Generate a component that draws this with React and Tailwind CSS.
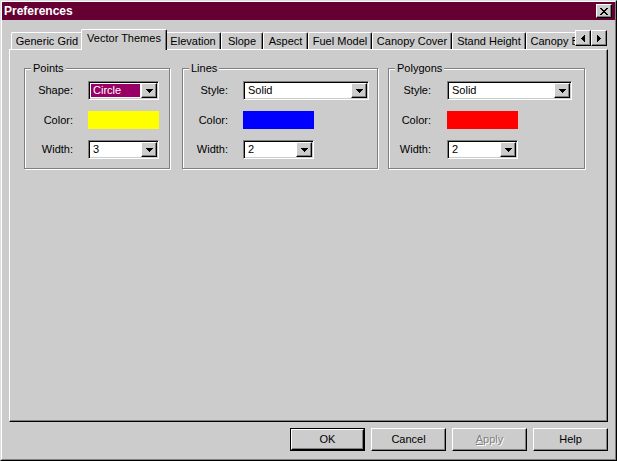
import React from 'react';

const tabs = [
  { label: 'Generic Grid', w: 'w-[72px]' },
  { label: 'Vector Themes', w: 'w-[86px]', active: true },
  { label: 'Elevation', w: 'w-[56px]' },
  { label: 'Slope', w: 'w-[42px]' },
  { label: 'Aspect', w: 'w-[45px]' },
  { label: 'Fuel Model', w: 'w-[64px]' },
  { label: 'Canopy Cover', w: 'w-[80px]' },
  { label: 'Stand Height', w: 'w-[74px]' },
  { label: 'Canopy Base Height', w: 'w-[110px]' },
];

const DownArrow = () => (
  <svg width="7" height="4" viewBox="0 0 7 4">
    <path d="M0 0h7v1h-1v1h-1v1h-1v1h-1v-1h-1v-1h-1v-1h-1z" fill="#000" />
  </svg>
);

const LeftArrow = () => (
  <svg width="4" height="7" viewBox="0 0 4 7">
    <path d="M4 0v7h-1v-1h-1v-1h-1v-1h-1v-1h1v-1h1v-1h1v-1z" fill="#000" />
  </svg>
);

const RightArrow = () => (
  <svg width="4" height="7" viewBox="0 0 4 7">
    <path d="M0 0v7h1v-1h1v-1h1v-1h1v-1h-1v-1h-1v-1h-1v-1z" fill="#000" />
  </svg>
);

// pixel X used on the caption close box
const xRows = ['11000011', '01100110', '00111100', '00011000', '00111100', '01100110', '11000011'];
const CloseGlyph = () => (
  <svg width="8" height="7" viewBox="0 0 8 7">
    {xRows.map((row, y) =>
      row.split('').map((c, x) => (c === '1' ? <rect key={`${x}-${y}`} x={x} y={y} width="1" height="1" fill="#000" /> : null))
    )}
  </svg>
);

const raised =
  'border border-t-white border-l-white border-r-black border-b-black shadow-[inset_-1px_-1px_0_#808080] bg-[#cccccc]';

const Combo = ({ value, w, highlight }) => (
  <div
    className={`flex h-[19px] ${w} bg-white p-[1px] border border-t-[#808080] border-l-[#808080] border-r-white border-b-white shadow-[inset_1px_1px_0_#000,inset_-1px_-1px_0_#cccccc]`}
  >
    <div className="flex-1 flex items-center pl-[1px]">
      {highlight ? (
        <span className="flex-1 h-[13px] mr-[1px] bg-[#990066] text-white leading-[13px] pl-[2px]">{value}</span>
      ) : (
        <span className="pl-[2px]">{value}</span>
      )}
    </div>
    <div className={`w-[16px] h-[15px] flex items-center justify-center ${raised}`}>
      <DownArrow />
    </div>
  </div>
);

const Swatch = ({ color }) => <div className={`h-[18px] w-[71px] ${color}`} />;

const Row = ({ label, labelW, gap, children, className = '' }) => (
  <div className={`flex items-center ${className}`}>
    <span className={`${labelW} text-right`}>{label}</span>
    <div className={gap}>{children}</div>
  </div>
);

const Group = ({ title, className, children }) => (
  <div
    className={`relative flex flex-col border border-[#808080] shadow-[inset_1px_1px_0_#fff,1px_1px_0_#fff] pt-[12px] pb-[9px] ${className}`}
  >
    <span className="absolute -top-[8px] left-[6px] bg-[#cccccc] px-[2px] leading-[14px]">{title}</span>
    {children}
  </div>
);

const Button = ({ children, isDefault, disabled }) => {
  const inner = (
    <div
      className={`flex-1 flex items-center justify-center ${raised} ${
        disabled ? 'text-[#808080] [text-shadow:1px_1px_0_#fff]' : ''
      }`}
    >
      {children}
    </div>
  );
  return isDefault ? (
    <div className="w-[75px] h-[23px] flex border border-black">{inner}</div>
  ) : (
    <div className="w-[75px] h-[23px] flex">{inner}</div>
  );
};

export default function App() {
  return (
    <div className="w-[617px] h-[461px] flex flex-col bg-[#cccccc] text-[11px] text-black font-['Liberation_Sans',Arial,sans-serif] border border-t-[#dfdfdf] border-l-[#dfdfdf] border-r-black border-b-black">
      <div className="flex-1 flex flex-col border border-t-white border-l-white border-r-[#808080] border-b-[#808080]">
        {/* Caption */}
        <div className="h-[18px] bg-[#660033] flex items-center justify-between pl-[2px] pr-[3px]">
          <span className="text-white font-bold text-[12px]">Preferences</span>
          <div className={`w-[16px] h-[14px] flex items-center justify-center ${raised}`}>
            <CloseGlyph />
          </div>
        </div>

        {/* Tab strip */}
        <div className="relative z-10 mt-[9px] -mb-[1px] h-[21px] flex pl-[9px] pr-[8px]">
          <div className="flex-1 min-w-0 overflow-hidden flex items-end">
            {tabs.map((t) =>
              t.active ? (
                <div
                  key={t.label}
                  className={`relative z-10 -mx-[2px] h-[21px] ${t.w} shrink-0 bg-[#cccccc] flex items-center justify-center pb-[3px] border-l border-t border-r border-l-white border-t-white border-r-black rounded-tl-[2px] rounded-tr-[2px] shadow-[inset_-1px_0_0_#808080]`}
                >
                  {t.label}
                </div>
              ) : (
                <div
                  key={t.label}
                  className={`h-[17px] mb-[1px] ${t.w} shrink-0 flex items-center justify-center whitespace-nowrap overflow-hidden border-l border-t border-r border-l-white border-t-white border-r-black rounded-tl-[2px] rounded-tr-[2px] shadow-[inset_-1px_0_0_#808080]`}
                >
                  {t.label}
                </div>
              )
            )}
          </div>
          <div className="flex self-start mt-[1px]">
            <div className={`w-[16px] h-[16px] flex items-center justify-center ${raised}`}>
              <LeftArrow />
            </div>
            <div className={`w-[16px] h-[16px] flex items-center justify-center ${raised}`}>
              <RightArrow />
            </div>
          </div>
        </div>

        {/* Tab page */}
        <div className="flex-1 mx-[7px] flex items-start pt-[18px] pl-[14px] border border-t-white border-l-white border-r-black border-b-black shadow-[inset_-1px_-1px_0_#808080]">
          <Group title="Points" className="w-[146px]">
            <Row label="Shape:" labelW="w-[48px]" gap="ml-[15px]">
              <Combo value="Circle" w="w-[71px]" highlight />
            </Row>
            <Row label="Color:" labelW="w-[48px]" gap="ml-[15px]" className="mt-[11px]">
              <Swatch color="bg-[#ffff00]" />
            </Row>
            <Row label="Width:" labelW="w-[48px]" gap="ml-[15px]" className="mt-[11px]">
              <Combo value="3" w="w-[71px]" />
            </Row>
          </Group>

          <Group title="Lines" className="w-[196px] ml-[12px]">
            <Row label="Style:" labelW="w-[45px]" gap="ml-[15px]">
              <Combo value="Solid" w="w-[126px]" />
            </Row>
            <Row label="Color:" labelW="w-[45px]" gap="ml-[15px]" className="mt-[11px]">
              <Swatch color="bg-[#0000ff]" />
            </Row>
            <Row label="Width:" labelW="w-[45px]" gap="ml-[15px]" className="mt-[11px]">
              <Combo value="2" w="w-[71px]" />
            </Row>
          </Group>

          <Group title="Polygons" className="w-[197px] ml-[10px]">
            <Row label="Style:" labelW="w-[42px]" gap="ml-[16px]">
              <Combo value="Solid" w="w-[125px]" />
            </Row>
            <Row label="Color:" labelW="w-[42px]" gap="ml-[16px]" className="mt-[11px]">
              <Swatch color="bg-[#ff0000]" />
            </Row>
            <Row label="Width:" labelW="w-[42px]" gap="ml-[16px]" className="mt-[11px]">
              <Combo value="2" w="w-[71px]" />
            </Row>
          </Group>
        </div>

        {/* Dialog buttons */}
        <div className="flex justify-end gap-[6px] mt-[6px] mb-[8px] mr-[7px]">
          <Button isDefault>OK</Button>
          <Button>Cancel</Button>
          <Button disabled>
            <span>
              <span className="underline">A</span>pply
            </span>
          </Button>
          <Button>Help</Button>
        </div>
      </div>
    </div>
  );
}
